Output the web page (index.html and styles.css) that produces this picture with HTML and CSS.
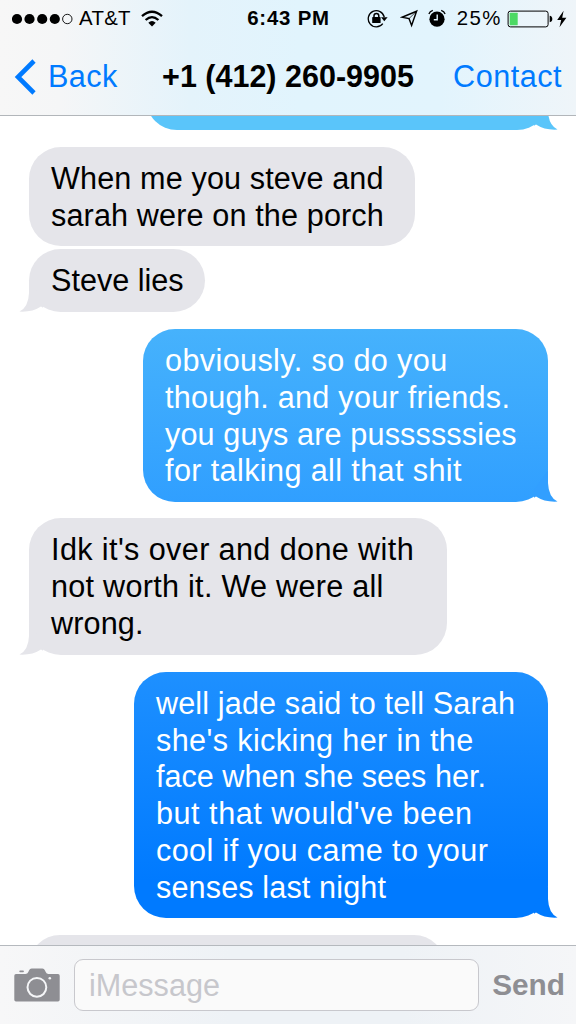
FILE: index.html
```
<!DOCTYPE html>
<html lang="en">
<head>
    <meta charset="UTF-8">
    <title>Messages</title>
    <link rel="stylesheet" href="styles.css">
</head>
<body>
    <header class="top-bar">
        <div class="status-bar">
            <div class="status-left">
                <svg class="signal" width="62" height="12" viewBox="0 0 62 12">
                    <circle cx="5" cy="6" r="5.1"/>
                    <circle cx="17.5" cy="6" r="5.1"/>
                    <circle cx="30.2" cy="6" r="5.1"/>
                    <circle cx="42.8" cy="6" r="5.1"/>
                    <circle cx="55.3" cy="6" r="4.7" fill="none" stroke="#000" stroke-width="0.9"/>
                </svg>
                <span class="carrier">AT&amp;T</span>
                <svg class="wifi" width="22" height="17" viewBox="0 0 22 17" fill="none" stroke="#000" stroke-width="2.3">
                    <path d="M1 6.2 Q11 -2.8 21 6.2"/>
                    <path d="M4.6 10 Q11 4.2 17.4 10"/>
                    <path d="M11 16.5 L7.3 12.7 Q11 9.4 14.7 12.7 Z" fill="#000" stroke="none"/>
                </svg>
            </div>
            <div class="time">6:43 PM</div>
            <div class="status-right">
                <svg width="21" height="19" viewBox="0 0 21 19">
                    <path d="M15.8 14.7 A8.1 8.1 0 1 1 17.3 8.2" fill="none" stroke="#000" stroke-width="1.3"/>
                    <path d="M14 8.2 H20.6 L17.3 12.2 Z"/>
                    <rect x="5.2" y="8.1" width="8.4" height="6" rx="0.6"/>
                    <path d="M7 8.6 V6.8 a2.4 2.4 0 0 1 4.8 0 V8.6" fill="none" stroke="#000" stroke-width="1.5"/>
                </svg>
                <svg class="location" width="19" height="19" viewBox="0 0 19 19">
                    <path d="M16.6 2.2 L2 8.2 L9 9.6 L11.6 16.4 Z" fill="none" stroke="#000" stroke-width="1.5"/>
                    <path d="M16.6 2.2 L9 9.6" stroke="#000" stroke-width="0.7"/>
                </svg>
                <svg class="alarm" width="18" height="19" viewBox="0 0 18 19">
                    <circle cx="9" cy="10.2" r="7.6"/>
                    <path d="M0.9 5 Q1.8 2.2 4.8 1.4 M17.1 5 Q16.2 2.2 13.2 1.4" fill="none" stroke="#000" stroke-width="1.3"/>
                    <path d="M9.2 5.6 V10.7 H5.8" fill="none" stroke="#e3f4fd" stroke-width="1.4"/>
                </svg>
                <span class="percent">25%</span>
                <svg class="battery" width="60" height="18" viewBox="0 0 60 18">
                    <rect x="1.1" y="1.1" width="40" height="15.8" rx="2.4" fill="none" stroke="#000" stroke-width="1"/>
                    <rect x="2.7" y="2.7" width="8" height="12.6" rx="0.6" fill="#4cd964"/>
                    <path d="M42.7 5.8 Q45.3 6.2 45.3 9 Q45.3 11.8 42.7 12.2 Z"/>
                    <path d="M56.6 0.8 L50.2 9.9 H54.2 L52.5 17.2 L59.4 7.8 H55.2 Z"/>
                </svg>
            </div>
        </div>
        <nav class="nav-bar">
            <div class="back">
                <svg width="22" height="36" viewBox="0 0 22 36">
                    <path d="M20 2 L4 18 L20 34" fill="none" stroke="#007aff" stroke-width="4.6"/>
                </svg>
                <span>Back</span>
            </div>
            <h1>+1 (412) 260-9905</h1>
            <div class="contact">Contact</div>
        </nav>
    </header>

    <main class="messages">
        <div class="bubble sent first">
            <svg class="tail" width="24" height="32" viewBox="0 0 24 32"><path d="M0 20 L14 0 V13 Q14.5 27 23.5 31.6 Q11 32.4 2 26.5 L0 27.8 Z"/></svg>
        </div>
        <div class="bubble received grouped">
            <p class="loose-1">When me you steve and</p>
            <p class="loose-1">sarah were on the porch</p>
        </div>
        <div class="bubble received">
            <p>Steve lies</p>
            <svg class="tail" width="24" height="32" viewBox="0 0 24 32"><path d="M0 20 L14 0 V13 Q14.5 27 23.5 31.6 Q11 32.4 2 26.5 L0 27.8 Z"/></svg>
        </div>
        <div class="bubble sent second">
            <p class="loose-3">obviously. so do you</p>
            <p class="loose-2">though. and your friends.</p>
            <p class="loose-1">you guys are pussssssies</p>
            <p class="loose-3">for talking all that shit</p>
            <svg class="tail" width="24" height="32" viewBox="0 0 24 32"><path d="M0 20 L14 0 V13 Q14.5 27 23.5 31.6 Q11 32.4 2 26.5 L0 27.8 Z"/></svg>
        </div>
        <div class="bubble received wide">
            <p class="loose-3">Idk it's over and done with</p>
            <p class="loose-2">not worth it. We were all</p>
            <p class="loose-1">wrong.</p>
            <svg class="tail" width="24" height="32" viewBox="0 0 24 32"><path d="M0 20 L14 0 V13 Q14.5 27 23.5 31.6 Q11 32.4 2 26.5 L0 27.8 Z"/></svg>
        </div>
        <div class="bubble sent third">
            <p class="loose-1">well jade said to tell Sarah</p>
            <p class="loose-3">she's kicking her in the</p>
            <p>face when she sees her.</p>
            <p class="loose-4">but that would've been</p>
            <p class="loose-3">cool if you came to your</p>
            <p class="loose-1">senses last night</p>
            <svg class="tail" width="24" height="32" viewBox="0 0 24 32"><path d="M0 20 L14 0 V13 Q14.5 27 23.5 31.6 Q11 32.4 2 26.5 L0 27.8 Z"/></svg>
        </div>
        <div class="bubble received last"></div>
    </main>

    <footer class="compose">
        <svg class="camera" width="46" height="34" viewBox="0 0 46 34">
            <path d="M2 6 H11.5 Q13.5 6 14.3 4 L15 2.4 Q15.8 0.6 17.6 0.6 H28.4 Q30.2 0.6 31 2.4 L31.7 4 Q32.5 6 34.5 6 H44 Q45.7 6 45.7 7.7 V31.8 Q45.7 33.5 44 33.5 H2 Q0.3 33.5 0.3 31.8 V7.7 Q0.3 6 2 6 Z" fill="#8e8e93"/>
            <rect x="5.3" y="2.6" width="4.6" height="1.6" rx="0.8" fill="#8e8e93"/>
            <circle cx="22.9" cy="19.3" r="9.4" fill="none" stroke="#f5f6f8" stroke-width="2"/>
            <circle cx="35.8" cy="10.3" r="1.3" fill="#f5f6f8"/>
        </svg>
        <div class="field">iMessage</div>
        <div class="send">Send</div>
    </footer>
</body>
</html>
```
FILE: styles.css
```
* {
    box-sizing: border-box;
}

body {
    margin: 0;
    width: 576px;
    height: 1024px;
    display: flex;
    flex-direction: column;
    overflow: hidden;
    background-color: #fff;
    color: #000;
    font-family: "Liberation Sans", Arial, sans-serif;
    font-size: 30.6px;
}

svg {
    display: block;
    flex: none;
}

p {
    margin: 0;
}

.top-bar {
    height: 116px;
    flex: none;
    border-bottom: 1px solid #b2b6ba;
    background: linear-gradient(to right, #f7f7f7 0, #f5f6f7 60px, #e4f3fb 190px, #e1f4fd 300px, #e2f4fd 440px, #eff5f9 576px);
}

.status-bar {
    height: 37px;
    padding: 0 9px 0 12px;
    display: grid;
    grid-template-columns: 1fr auto 1fr;
    align-items: center;
    font-size: 20.4px;
}

.status-left,
.status-right {
    display: flex;
    align-items: center;
}

.status-right {
    justify-content: flex-end;
}

.carrier {
    margin-left: 5px;
    letter-spacing: 0.3px;
}

.wifi {
    margin-left: 10px;
}

.time {
    font-weight: bold;
    letter-spacing: 0.8px;
    margin-right: 2px;
}

.location {
    margin-left: 12px;
}

.alarm {
    margin-left: 9px;
}

.percent {
    margin-left: 11px;
    letter-spacing: 1.5px;
}

.battery {
    margin-left: 5px;
}

.nav-bar {
    height: 78px;
    padding: 1px 14px 0 14px;
    display: grid;
    grid-template-columns: 1fr auto 1fr;
    align-items: center;
}

.back {
    display: flex;
    align-items: center;
    gap: 12px;
    letter-spacing: 0.4px;
}

.back,
.contact {
    color: #007aff;
}

.contact {
    text-align: right;
    letter-spacing: 0.5px;
}

h1 {
    margin: 0;
    font-size: 30.5px;
}

.messages {
    flex: 1;
    min-height: 0;
    overflow: hidden;
    display: flex;
    flex-direction: column;
    align-items: flex-start;
    padding: 0 28px 0 29px;
}

.bubble {
    position: relative;
    flex: none;
    padding: 13px 20px 13px 22px;
    margin-bottom: 17px;
    border-radius: 32px;
    line-height: 36.7px;
    white-space: nowrap;
}

.loose-1 {
    letter-spacing: 0.13px;
}

.loose-2 {
    letter-spacing: 0.27px;
}

.loose-3 {
    letter-spacing: 0.38px;
}

.loose-4 {
    letter-spacing: 0.52px;
}

.received {
    background-color: #e5e5ea;
    fill: #e5e5ea;
    width: 176px;
}

.received.grouped {
    width: 386px;
    margin-bottom: 3px;
}

.received.wide {
    width: 418px;
    padding-top: 13.5px;
    padding-bottom: 13.5px;
}

.received.last {
    width: 416px;
    height: 62px;
}

.sent {
    align-self: flex-end;
    color: #fff;
}

.sent.first {
    width: 402px;
    height: 62px;
    margin-top: -48px;
    background-color: #5ac5fa;
    fill: #5ac5fa;
}

.sent.second {
    width: 405px;
    background: linear-gradient(#46b2fc, #309fff);
    fill: #329fff;
    margin-bottom: 16px;
}

.sent.third {
    width: 414px;
    background: linear-gradient(#1e90ff, #007aff 85%);
    fill: #007aff;
}

.tail {
    position: absolute;
    right: -10px;
    bottom: 0;
}

.received .tail {
    right: auto;
    left: -10px;
    transform: scaleX(-1);
}

.compose {
    height: 79px;
    flex: none;
    padding: 0 11px 0 14px;
    display: flex;
    align-items: center;
    border-top: 1px solid #b5b9be;
    background: linear-gradient(to right, #f7f7f8, #eef2f6 40%, #eef2f6 70%, #f5f6f8);
}

.field {
    width: 405px;
    height: 52px;
    margin-left: 14px;
    padding-left: 14px;
    border: 1px solid #c8c8cd;
    border-radius: 9px;
    background-color: #fafafa;
    color: #c7c7cc;
    line-height: 51px;
}

.send {
    margin-left: auto;
    color: #8e8e93;
    font-weight: bold;
    font-size: 29.8px;
}
```
